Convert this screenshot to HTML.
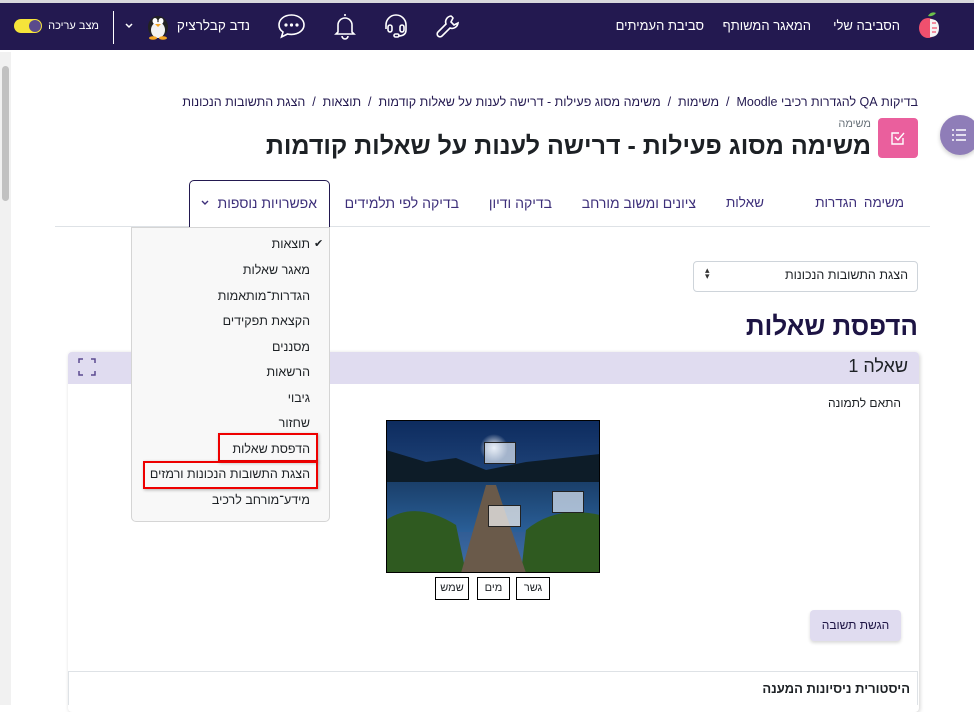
<!DOCTYPE html>
<html lang="he" dir="rtl"><head><meta charset="utf-8">
<style>
*{box-sizing:border-box;margin:0;padding:0}
body{width:974px;height:705px;overflow:hidden;background:#fff;font-family:"Liberation Sans","Noto Sans CJK SC",sans-serif;position:relative;color:#1d2125}
.a{position:absolute;white-space:nowrap}
.nav{position:absolute;left:0;top:3px;width:974px;height:47px;background:#231950}
.nl{color:#fff;font-size:13px;top:18px}
.tab{top:195px;font-size:13.5px;color:#3d2f7a}
.mi{right:664px;font-size:12.5px;color:#1d2125}
</style></head><body>
<div class="a" style="left:0;top:0;width:974px;height:3px;background:#d8d8dc"></div>
<div class="nav"></div>
<svg class="a" style="left:916px;top:11px" width="28" height="30" viewBox="0 0 28 30"><path d="M12 5 q3-5 8-3 q-3 4-8 3z" fill="#6cc04a"/><ellipse cx="12" cy="17" rx="9" ry="10" fill="#f0506e"/><path d="M14 8 q9 0 9 9 q0 9-9 9z" fill="#f4f4f4"/><path d="M16 12h4M16 17h5M16 21h4" stroke="#f0506e" stroke-width="1.3"/></svg>
<div class="a nl" style="right:74px">הסביבה שלי</div>
<div class="a nl" style="right:163px">המאגר המשותף</div>
<div class="a nl" style="right:270px">סביבת העמיתים</div>
<svg class="a" style="left:434px;top:12px" width="28" height="28" viewBox="0 0 28 28" fill="none" stroke="#fff" stroke-width="1.6"><path d="M17 4a6 6 0 0 0-5 8L4 20a2.5 2.5 0 0 0 4 4l8-8a6 6 0 0 0 8-5l-4 2-3-3 2-4a6 6 0 0 0-2-2z"/></svg>
<svg class="a" style="left:381px;top:11px" width="30" height="30" viewBox="0 0 30 30" fill="none" stroke="#fff" stroke-width="1.6"><path d="M5 18v-4a10 10 0 0 1 20 0v5c0 4-3 6-8 6"/><rect x="7" y="14" width="4" height="7" rx="2"/><rect x="19" y="14" width="4" height="7" rx="2"/><rect x="13" y="23" width="5" height="3" rx="1.5"/></svg>
<svg class="a" style="left:331px;top:11px" width="28" height="30" viewBox="0 0 28 30" fill="none" stroke="#fff" stroke-width="1.6"><path d="M14 3v2M7 21V14a7 7 0 0 1 14 0v7l2 2H5z"/><path d="M11 25a3 3 0 0 0 6 0"/></svg>
<svg class="a" style="left:276px;top:12px" width="31" height="28" viewBox="0 0 31 28" fill="none" stroke="#fff" stroke-width="1.6"><path d="M15.5 3C8 3 3 7.5 3 13c0 3 1.5 5.5 4 7l-1.5 5 6-3c1.2.3 2.5.4 4 .4 7.5 0 12.5-4.5 12.5-9.5S23 3 15.5 3z"/><circle cx="10" cy="13" r=".8" fill="#fff"/><circle cx="15.5" cy="13" r=".8" fill="#fff"/><circle cx="21" cy="13" r=".8" fill="#fff"/></svg>
<div class="a nl" style="right:724px;font-size:13.5px">נדב קבלרציק</div>
<svg class="a" style="left:144px;top:12px" width="28" height="28" viewBox="0 0 28 28"><ellipse cx="14" cy="15" rx="10" ry="11" fill="#222"/><ellipse cx="14" cy="18" rx="7" ry="8" fill="#f2f2f2"/><ellipse cx="11" cy="9" rx="2.5" ry="3" fill="#fff"/><ellipse cx="17" cy="9" rx="2.5" ry="3" fill="#fff"/><path d="M11 12h6l-3 3z" fill="#f5a623"/><ellipse cx="9" cy="26" rx="4" ry="1.8" fill="#f5a623"/><ellipse cx="19" cy="26" rx="4" ry="1.8" fill="#f5a623"/></svg>
<svg class="a" style="left:125px;top:23px" width="8" height="6" viewBox="0 0 8 6"><path d="M1 1l3 3 3-3" stroke="#fff" stroke-width="1.5" fill="none"/></svg>
<div class="a" style="left:113px;top:11px;width:1px;height:33px;background:#fff"></div>
<div class="a" style="right:875px;top:20px;font-size:11px;color:#fff">מצב עריכה</div>
<div class="a" style="left:14px;top:19px;width:28px;height:14px;border-radius:7px;background:#f5e43a"></div>
<div class="a" style="left:29px;top:20px;width:12px;height:12px;border-radius:6px;background:#5a4a8c"></div>
<div class="a" style="left:0;top:52px;width:11px;height:653px;background:#f1f1f1"></div>
<div class="a" style="left:2px;top:66px;width:7px;height:135px;border-radius:4px;background:#c1c1c1"></div>
<div class="a" style="right:56px;top:95px;font-size:12.5px;color:#231950">בדיקות QA להגדרות רכיבי Moodle &nbsp;/&nbsp; משימות &nbsp;/&nbsp; משימה מסוג פעילות - דרישה לענות על שאלות קודמות &nbsp;/&nbsp; תוצאות &nbsp;/&nbsp; הצגת התשובות הנכונות</div>
<div class="a" style="left:878px;top:118px;width:40px;height:40px;border-radius:4px;background:#ea5f9d"></div>
<svg class="a" style="left:889px;top:129px" width="18" height="18" viewBox="0 0 18 18" fill="none" stroke="#fff" stroke-width="1.4"><path d="M14 9v6H3V4h7"/><path d="M6 8l3 3 6-7"/></svg>
<div class="a" style="right:103px;top:118px;font-size:11px;color:#6a737b">משימה</div>
<div class="a" style="right:103px;top:132px;font-size:25px;font-weight:bold;color:#1d2125">משימה מסוג פעילות - דרישה לענות על שאלות קודמות</div>
<div class="a" style="left:940px;top:115px;width:40px;height:40px;border-radius:20px;background:#8f7db8;box-shadow:0 2px 4px rgba(0,0,0,.2)"></div>
<svg class="a" style="left:951px;top:128px" width="16" height="14" viewBox="0 0 16 14" stroke="#fff" stroke-width="1.5"><path d="M5 2h10M5 7h10M5 12h10M1 2h2M1 7h2M1 12h2"/></svg>
<div class="a" style="left:55px;top:226px;width:875px;height:1px;background:#dee2e6"></div>
<div class="a" style="left:189px;top:180px;width:141px;height:47px;border:1.5px solid #231950;border-bottom:none;border-radius:5px 5px 0 0;background:#fff"></div>
<div class="a tab" style="right:70px">משימה</div>
<div class="a tab" style="right:117px">הגדרות</div>
<div class="a tab" style="right:210px">שאלות</div>
<div class="a tab" style="right:278px;font-size:14px">ציונים ומשוב מורחב</div>
<div class="a tab" style="right:422px;font-size:14px">בדיקה ודיון</div>
<div class="a tab" style="right:515px;font-size:14px">בדיקה לפי תלמידים</div>
<div class="a tab" style="right:657px;font-size:14px">אפשרויות נוספות</div>
<svg class="a" style="left:201px;top:200px" width="8" height="6" viewBox="0 0 8 6"><path d="M1 1l3 3 3-3" stroke="#3d2f7a" stroke-width="1.4" fill="none"/></svg>
<div class="a" style="left:693px;top:261px;width:225px;height:31px;border:1px solid #ced4da;border-radius:4px"></div>
<div class="a" style="right:66px;top:268px;font-size:12.5px;color:#1d2125">הצגת התשובות הנכונות</div>
<div class="a" style="left:705px;top:267px;font-size:9px;line-height:6px;color:#333">▴<br>▾</div>
<div class="a" style="right:56px;top:311px;font-size:26px;font-weight:bold;color:#1d1444">הדפסת שאלות</div>
<div class="a" style="left:68px;top:352px;width:851px;height:360px;background:#fff;box-shadow:1px 1px 4px rgba(0,0,0,.18);border-radius:4px"></div>
<div class="a" style="left:68px;top:352px;width:851px;height:32px;background:#e0dcf0;border-radius:4px 4px 0 0"></div>
<div class="a" style="right:66px;top:356px;font-size:18px;color:#1d2125">שאלה 1</div>
<svg class="a" style="left:78px;top:358px" width="18" height="18" viewBox="0 0 18 18" fill="none" stroke="#5b4a8f" stroke-width="1.5"><path d="M1 5V1h4M13 1h4v4M17 13v4h-4M5 17H1v-4"/></svg>
<div class="a" style="right:73px;top:396px;font-size:12px">התאם לתמונה</div>
<svg class="a" style="left:386px;top:420px" width="214" height="153" viewBox="0 0 214 153">
<defs><linearGradient id="sky" x1="0" y1="0" x2="0" y2="1"><stop offset="0" stop-color="#0d2b5e"/><stop offset="1" stop-color="#3f6fa8"/></linearGradient>
<linearGradient id="lake" x1="0" y1="0" x2="0" y2="1"><stop offset="0" stop-color="#1a3f6a"/><stop offset="1" stop-color="#2a5f98"/></linearGradient>
<radialGradient id="moon"><stop offset="0" stop-color="#fff"/><stop offset="1" stop-color="#fff" stop-opacity="0"/></radialGradient></defs>
<rect width="214" height="153" fill="url(#sky)"/><circle cx="108" cy="28" r="14" fill="url(#moon)"/>
<path d="M0 30 L40 42 70 38 100 50 140 42 214 34 V65 H0z" fill="#0d1c28"/>
<rect y="62" width="214" height="50" fill="url(#lake)"/>
<path d="M0 100 Q30 80 70 105 L80 153 H0z" fill="#2f5a20"/><path d="M214 95 Q170 85 140 110 L135 153 H214z" fill="#2f5a20"/>
<path d="M100 65 L110 65 L140 153 H75z" fill="#6a5a4a"/>
<rect width="214" height="153" fill="none" stroke="#000" stroke-width="2"/>
<rect x="98.5" y="22.5" width="31" height="21" fill="#dfe8f4" fill-opacity=".7" stroke="#222"/>
<rect x="166.5" y="71.5" width="31" height="21" fill="#dfe8f4" fill-opacity=".7" stroke="#222"/>
<rect x="102.5" y="85.5" width="32" height="21" fill="#eee" fill-opacity=".75" stroke="#222"/>
</svg>
<div class="a" style="left:516px;top:577px;width:34px;height:23px;border:1.5px solid #000;font-size:11px;text-align:center;line-height:20px">גשר</div>
<div class="a" style="left:477px;top:577px;width:33px;height:23px;border:1.5px solid #000;font-size:11px;text-align:center;line-height:20px">מים</div>
<div class="a" style="left:435px;top:577px;width:34px;height:23px;border:1.5px solid #000;font-size:11px;text-align:center;line-height:20px">שמש</div>
<div class="a" style="left:810px;top:610px;width:91px;height:31px;background:#e0dcf0;border-radius:4px;box-shadow:0 2px 3px rgba(0,0,0,.15);font-size:12px;text-align:center;line-height:31px;color:#1d1444">הגשת תשובה</div>
<div class="a" style="left:68px;top:671px;width:850px;height:34px;border:1px solid #dee2e6;border-bottom:none"></div>
<div class="a" style="right:64px;top:681px;font-size:13px;font-weight:bold">היסטורית ניסיונות המענה</div>
<div class="a" style="left:131px;top:227px;width:199px;height:295px;background:#f8f8f8;border:1px solid #d5d5d5;border-radius:0 0 5px 5px"></div>
<div class="a" style="left:314px;top:237px;font-size:11px">✔</div>
<div class="a mi" style="top:237px">תוצאות</div>
<div class="a mi" style="top:263px">מאגר שאלות</div>
<div class="a mi" style="top:289px">הגדרות־מותאמות</div>
<div class="a mi" style="top:314px">הקצאת תפקידים</div>
<div class="a mi" style="top:340px">מסננים</div>
<div class="a mi" style="top:365px">הרשאות</div>
<div class="a mi" style="top:391px">גיבוי</div>
<div class="a mi" style="top:416px">שחזור</div>
<div class="a mi" style="top:442px">הדפסת שאלות</div>
<div class="a mi" style="top:467px">הצגת התשובות הנכונות ורמזים</div>
<div class="a mi" style="top:493px">מידע־מורחב לרכיב</div>
<div class="a" style="left:218px;top:433px;width:100px;height:29px;border:2px solid #e00;box-shadow:1px 1px 3px rgba(0,0,0,.3)"></div>
<div class="a" style="left:143px;top:461px;width:175px;height:28px;border:2px solid #e00;box-shadow:1px 1px 3px rgba(0,0,0,.3)"></div>
</body></html>
